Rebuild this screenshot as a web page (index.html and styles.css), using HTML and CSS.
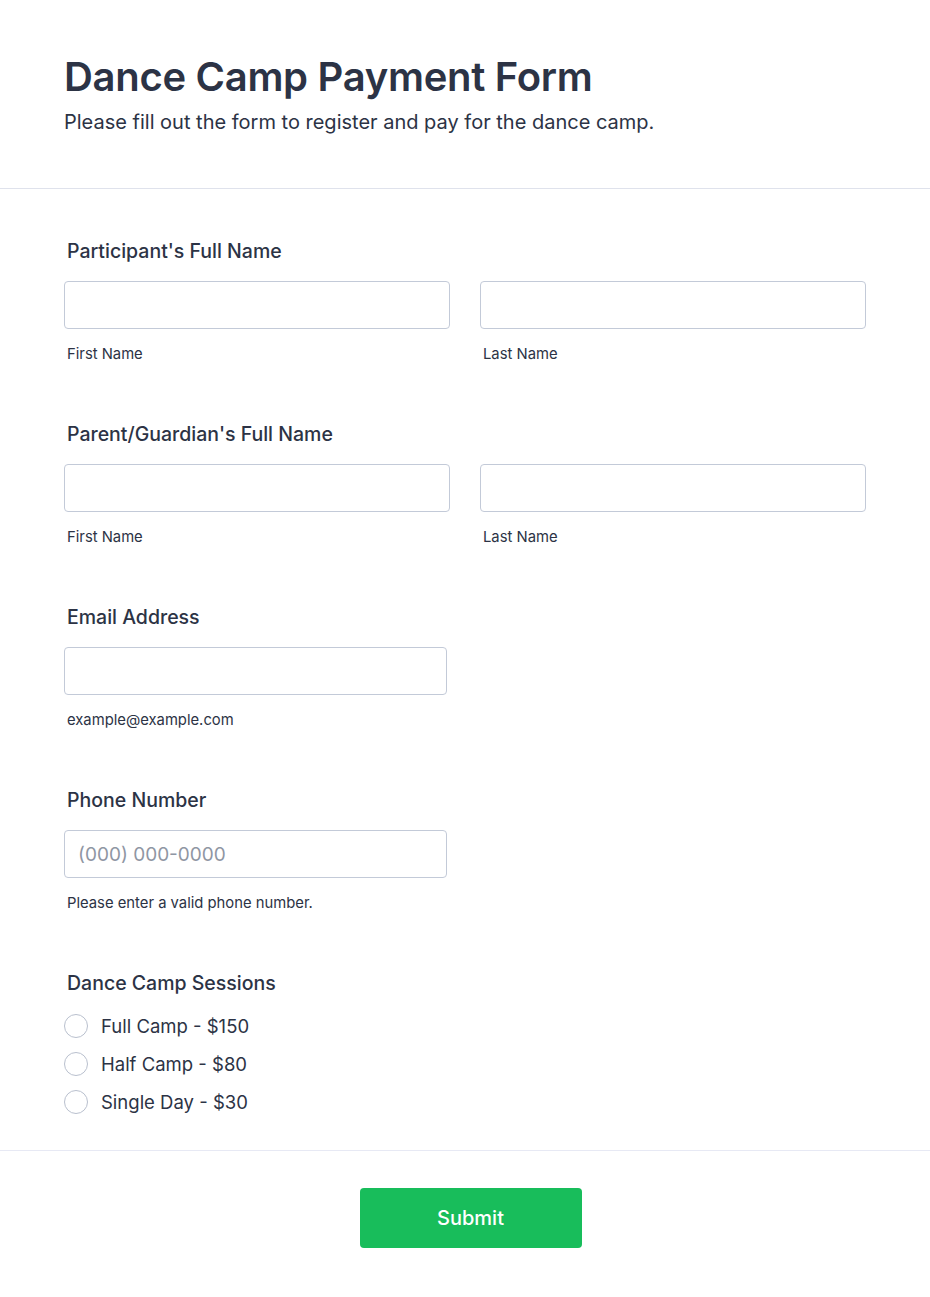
FILE: index.html
```html
<!DOCTYPE html>
<html lang="en">
<head>
<meta charset="utf-8">
<title>Dance Camp Payment Form</title>
<link rel="stylesheet" href="styles.css">
</head>
<body>
<div class="page">
  <header class="form-header">
    <h1 class="form-title">Dance Camp Payment Form</h1>
    <p class="form-subtitle">Please fill out the form to register and pay for the dance camp.</p>
  </header>
  <form class="form-body">
    <div class="field">
      <label class="field-label">Participant's Full Name</label>
      <div class="name-row">
        <div class="name-col">
          <input class="text-input" type="text">
          <span class="sublabel">First Name</span>
        </div>
        <div class="name-col">
          <input class="text-input" type="text">
          <span class="sublabel">Last Name</span>
        </div>
      </div>
    </div>
    <div class="field">
      <label class="field-label">Parent/Guardian's Full Name</label>
      <div class="name-row">
        <div class="name-col">
          <input class="text-input" type="text">
          <span class="sublabel">First Name</span>
        </div>
        <div class="name-col">
          <input class="text-input" type="text">
          <span class="sublabel">Last Name</span>
        </div>
      </div>
    </div>
    <div class="field">
      <label class="field-label">Email Address</label>
      <div class="single-col">
        <input class="text-input" type="email">
        <span class="sublabel">example@example.com</span>
      </div>
    </div>
    <div class="field">
      <label class="field-label">Phone Number</label>
      <div class="single-col">
        <input class="text-input" type="tel" placeholder="(000) 000-0000">
        <span class="sublabel">Please enter a valid phone number.</span>
      </div>
    </div>
    <div class="field field-last">
      <label class="field-label">Dance Camp Sessions</label>
      <div class="radio-list">
        <label class="radio-row"><span class="radio-circle"></span><span class="radio-text">Full Camp - $150</span></label>
        <label class="radio-row"><span class="radio-circle"></span><span class="radio-text">Half Camp - $80</span></label>
        <label class="radio-row"><span class="radio-circle"></span><span class="radio-text">Single Day - $30</span></label>
      </div>
    </div>
  </form>
  <footer class="form-footer">
    <button class="submit-btn" type="button">Submit</button>
  </footer>
</div>
</body>
</html>
```
FILE: styles.css
```css
* { box-sizing: border-box; }
html, body { margin: 0; padding: 0; background: #fff; }
body {
  font-family: Inter, "Noto Sans", "Liberation Sans", sans-serif;
  color: #2c3345;
}
.page { width: 930px; }

.form-header {
  padding: 53px 64px 0;
  height: 189px;
  border-bottom: 1px solid #dfe2ec;
}
.form-title {
  margin: 0;
  font-size: 40px;
  line-height: 48px;
  font-weight: 600;
  color: #2c3345;
  letter-spacing: -0.3px;
}
.form-subtitle {
  margin: 7px 0 0;
  font-size: 20px;
  line-height: 28px;
  font-weight: 400;
  color: #2c3345;
}

.form-body {
  padding: 48px 64px 29px;
  border-bottom: 1px solid #e7e9f4;
  display: flex;
  flex-direction: column;
  gap: 56px;
}
.field { display: flex; flex-direction: column; }
.field-label {
  font-size: 19.5px;
  line-height: 28px;
  font-weight: 500;
  padding-left: 3px;
  margin-bottom: 16px;
  color: #2c3345;
}
.field-last .field-label { margin-bottom: 10px; }

.name-row { display: flex; gap: 30px; }
.name-col { width: 386px; display: flex; flex-direction: column; }
.single-col { width: 383px; display: flex; flex-direction: column; }

.text-input {
  display: block;
  width: 100%;
  height: 48px;
  border: 1px solid #c3cad8;
  border-radius: 4px;
  padding: 0 13px;
  font-family: Inter, "Noto Sans", sans-serif;
  font-size: 19px;
  color: #2c3345;
  background: #fff;
  outline: none;
}
.text-input::placeholder { color: #8f96a3; }

.sublabel {
  margin-top: 15px;
  font-size: 14.8px;
  line-height: 20px;
  padding-left: 3px;
  color: #2c3345;
}

.radio-list { display: flex; flex-direction: column; }
.radio-row {
  height: 38px;
  display: flex;
  align-items: center;
  gap: 13px;
}
.radio-circle {
  width: 24px;
  height: 24px;
  border: 1px solid #b9c0ce;
  border-radius: 50%;
  flex: none;
  background: #fff;
}
.radio-text {
  font-size: 18.5px;
  line-height: 28px;
  color: #2c3345;
}

.form-footer {
  display: flex;
  justify-content: center;
  padding: 37px 0 49px;
}
.submit-btn {
  width: 222px;
  height: 60px;
  margin-left: 11px;
  background: #18bd5b;
  border: none;
  border-radius: 4px;
  color: #fff;
  font-family: Inter, "Noto Sans", sans-serif;
  font-size: 20px;
  font-weight: 500;
}
```
